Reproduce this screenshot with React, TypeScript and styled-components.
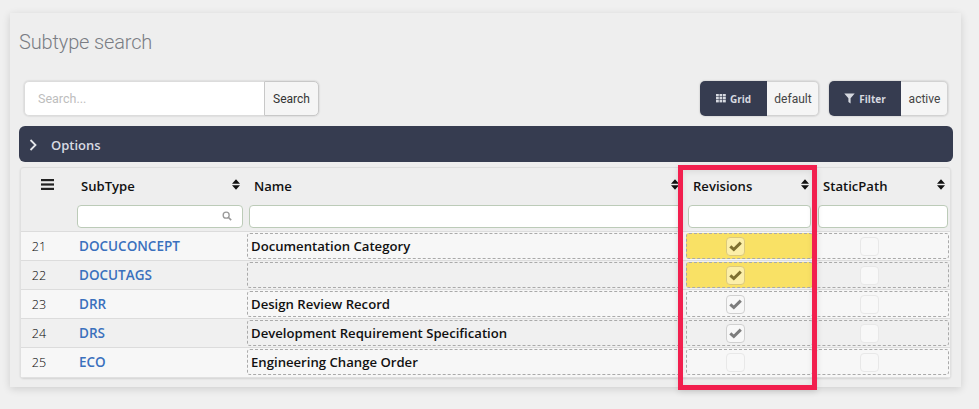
import React from 'react'
import styled, {createGlobalStyle} from 'styled-components'

const rows = [
  {id: 21, subType: 'DOCUCONCEPT', name: 'Documentation Category', revisions: true, changed: true},
  {id: 22, subType: 'DOCUTAGS', name: '', revisions: true, changed: true},
  {id: 23, subType: 'DRR', name: 'Design Review Record', revisions: true, changed: false},
  {id: 24, subType: 'DRS', name: 'Development Requirement Specification', revisions: true, changed: false},
  {id: 25, subType: 'ECO', name: 'Engineering Change Order', revisions: false, changed: false},
]

const SortIcon = () => (
  <SortSvg viewBox="0 0 8 11">
    <path d="M4 0.2 L8 4.8 H0 Z M4 10.8 L0 6.2 H8 Z" fill="#111" />
  </SortSvg>
)

const CheckIcon = () => (
  <svg width="13" height="11" viewBox="0 0 13 11">
    <path d="M1.3 5.4 L4.8 8.5 L11.8 1.6" fill="none" stroke="currentColor" strokeWidth="3" />
  </svg>
)

const GridIcon = () => (
  <svg width="10" height="9" viewBox="0 0 10 9" fill="#d6d9e0">
    {[0, 3.5, 7].map(x => [0, 3, 6].map(y => <rect key={`${x}-${y}`} x={x} y={y} width="2.8" height="2.4" />))}
  </svg>
)

const FilterIcon = () => (
  <svg width="11" height="11" viewBox="0 0 11 11">
    <path d="M0.3 0.5 H10.7 L6.6 5.2 V10.5 L4.4 9 V5.2 Z" fill="#d6d9e0" />
  </svg>
)

const SearchGlass = () => (
  <GlassSvg viewBox="0 0 12 12">
    <circle cx="5" cy="5" r="3.6" fill="none" stroke="#999" strokeWidth="1.6" />
    <path d="M7.8 7.8 L11 11" stroke="#999" strokeWidth="2" />
  </GlassSvg>
)

const App: React.FC = () => {
  return (
    <Page>
      <GlobalStyle />
      <Panel>
        <Title>Subtype search</Title>
        <Toolbar>
          <SearchGroup>
            <SearchInput placeholder="Search..." />
            <SearchButton>Search</SearchButton>
          </SearchGroup>
          <Spacer />
          <ToggleGroup>
            <ToggleDark $width={67}><GridIcon />Grid</ToggleDark>
            <ToggleLight $width={52}>default</ToggleLight>
          </ToggleGroup>
          <ToggleGroup>
            <ToggleDark $width={72}><FilterIcon />Filter</ToggleDark>
            <ToggleLight $width={47}>active</ToggleLight>
          </ToggleGroup>
        </Toolbar>
        <OptionsBar>
          <svg width="8" height="12" viewBox="0 0 8 12">
            <path d="M1.5 1 L6.5 6 L1.5 11" fill="none" stroke="#e4e6ea" strokeWidth="1.8" />
          </svg>
          <span>Options</span>
        </OptionsBar>
        <Table>
          <HeaderRow>
            <HandleCell>
              <svg width="13" height="11" viewBox="0 0 13 11" fill="#222">
                <rect y="0" width="13" height="2.2" />
                <rect y="4.4" width="13" height="2.2" />
                <rect y="8.8" width="13" height="2.2" />
              </svg>
            </HandleCell>
            <HeaderCell $inset={6} $end={7}>SubType<SortIcon /></HeaderCell>
            <HeaderCell $inset={7} $end={6}>Name<SortIcon /></HeaderCell>
            <HeaderCell $inset={8} $end={6}>Revisions<SortIcon /></HeaderCell>
            <HeaderCell $inset={8} $end={5}>StaticPath<SortIcon /></HeaderCell>
          </HeaderRow>
          <FilterRow>
            <div />
            <FilterCell $left={2} $right={4}>
              <FilterInput />
              <SearchGlass />
            </FilterCell>
            <FilterCell $left={2} $right={2}><FilterInput /></FilterCell>
            <FilterCell $left={3} $right={4}><FilterInput /></FilterCell>
            <FilterCell $left={3} $right={2}><FilterInput /></FilterCell>
          </FilterRow>
          {rows.map((row, i) => (
            <DataRow key={row.id} $odd={i % 2 === 1} $last={i === rows.length - 1}>
              <IdCell>{row.id}</IdCell>
              <SubTypeCell>{row.subType}</SubTypeCell>
              <EditCell>{row.name}</EditCell>
              <RevisionCell $changed={row.changed}>
                <CheckBox $checked={row.revisions} $changed={row.changed}>
                  {row.revisions && <CheckIcon />}
                </CheckBox>
              </RevisionCell>
              <StaticCell>
                <CheckBox $checked={false} $changed={false} />
              </StaticCell>
            </DataRow>
          ))}
        </Table>
      </Panel>
      <Highlight />
    </Page>
  )
}

export default App

const GlobalStyle = createGlobalStyle`
  html, body {
    margin: 0;
    background: #f0f0f0;
  }
  * {
    box-sizing: border-box;
  }
`

const Page = styled.div`
  position: relative;
  width: 979px;
  height: 409px;
  padding: 13px 18px 0 10px;
  overflow: hidden;
  font-family: "Open Sans", "Noto Sans", sans-serif;
`

const Panel = styled.div`
  height: 374px;
  padding: 14px 8px 0 9px;
  background: #eeeeee;
  box-shadow: 0 2px 8px rgba(0, 0, 0, 0.14);
`

const Title = styled.h1`
  margin: 0;
  height: 54px;
  padding-top: 1px;
  font: 300 20px/28px Roboto, sans-serif;
  letter-spacing: -0.15px;
  color: #7a7d84;
`

const Toolbar = styled.div`
  display: flex;
  align-items: stretch;
  height: 35px;
  padding: 0 5px;
  gap: 10px;
`

const Spacer = styled.div`
  flex: 1;
`

const SearchGroup = styled.div`
  display: flex;
  width: 295px;
  border-radius: 5px;
  box-shadow: 0 0 2px rgba(0, 0, 0, 0.2);
`

const SearchInput = styled.input`
  flex: 1;
  min-width: 0;
  padding: 0 13px;
  border: 1px solid #dcdcdc;
  border-right: 0;
  border-radius: 5px 0 0 5px;
  background: #fff;
  font: 400 12.5px Roboto, sans-serif;
  outline: none;
  &::placeholder {
    color: #bdbdbd;
  }
`

const SearchButton = styled.div`
  display: flex;
  align-items: center;
  justify-content: center;
  width: 55px;
  border: 1px solid #c8c8c8;
  border-radius: 0 5px 5px 0;
  background: #f5f5f5;
  font: 400 12px Roboto, sans-serif;
  color: #333;
`

const ToggleGroup = styled.div`
  display: flex;
  border-radius: 5px;
  box-shadow: 0 0 2px rgba(0, 0, 0, 0.25);
`

const ToggleDark = styled.div<{$width: number}>`
  display: flex;
  align-items: center;
  justify-content: center;
  gap: 4px;
  width: ${p => p.$width}px;
  border-radius: 5px 0 0 5px;
  background: #363c50;
  color: #d6d9e0;
  font: 700 10px "Open Sans", sans-serif;
`

const ToggleLight = styled.div<{$width: number}>`
  display: flex;
  align-items: center;
  justify-content: center;
  width: ${p => p.$width}px;
  padding-left: 1px;
  border: 1px solid #d2d2d2;
  border-left: 0;
  border-radius: 0 5px 5px 0;
  background: #f5f5f5;
  font: 400 12px Roboto, sans-serif;
  color: #444;
`

const OptionsBar = styled.div`
  display: flex;
  align-items: center;
  gap: 14px;
  height: 36px;
  margin-top: 10px;
  padding: 1px 0 0 10px;
  border-radius: 6px;
  background: #363c50;
  color: #d8dbe2;
  font-size: 13px;
  font-weight: 600;
`

const columns = '54px 172px 438px 130px 135px'

const Table = styled.div`
  width: 931px;
  margin: 5px 0 0 1px;
  border: 1px solid #e0e0e0;
  border-top-color: #dddddd;
  border-radius: 4px;
  box-shadow: 0 1px 2px rgba(0, 0, 0, 0.12);
`

const HeaderRow = styled.div`
  display: grid;
  grid-template-columns: ${columns};
  height: 37px;
`

const HandleCell = styled.div`
  display: flex;
  justify-content: center;
  padding: 11px 2px 0 0;
`

const HeaderCell = styled.div<{$inset: number; $end: number}>`
  display: flex;
  align-items: center;
  justify-content: space-between;
  padding: 0 ${p => p.$end}px 1px ${p => p.$inset}px;
  font-size: 13.1px;
  font-weight: 600;
  color: #111;
`

const SortSvg = styled.svg`
  width: 8px;
  height: 11px;
  margin-top: -4px;
`

const FilterRow = styled.div`
  display: grid;
  grid-template-columns: ${columns};
  height: 27px;
  border-bottom: 1px solid #dcdcdc;
`

const FilterCell = styled.div<{$left: number; $right: number}>`
  position: relative;
  padding: 0 ${p => p.$right}px 0 ${p => p.$left}px;
`

const FilterInput = styled.input`
  display: block;
  width: 100%;
  height: 23px;
  border: 1px solid #bccbb8;
  border-radius: 4px;
  background: #fff;
  outline: none;
`

const GlassSvg = styled.svg`
  position: absolute;
  top: 6px;
  right: 15px;
  width: 10px;
  height: 10px;
`

const DataRow = styled.div<{$odd: boolean; $last: boolean}>`
  display: grid;
  grid-template-columns: ${columns};
  height: 29px;
  background: ${p => p.$odd ? '#f0f0f0' : '#f7f7f7'};
  border-bottom: 1px solid ${p => p.$last ? 'transparent' : '#dcdcdc'};
`

const IdCell = styled.div`
  display: flex;
  align-items: center;
  justify-content: center;
  padding: 1px 18px 0 0;
  font-size: 12.5px;
  font-weight: 300;
  color: #000;
`

const SubTypeCell = styled.div`
  display: flex;
  align-items: center;
  padding-left: 4px;
  font-size: 13.5px;
  font-weight: 600;
  color: #3a70bd;
`

const DashedCell = styled.div`
  display: flex;
  align-items: center;
  margin: 1px 0;
  border: 1px dashed #aaaaaa;
  border-radius: 3px;
`

const EditCell = styled(DashedCell)`
  margin-right: 2px;
  padding-left: 3px;
  font-size: 13.15px;
  font-weight: 600;
  color: #111;
`

const RevisionCell = styled(DashedCell)<{$changed: boolean}>`
  justify-content: center;
  margin-left: 1px;
  margin-right: 2px;
  padding-right: 28px;
  background: ${p => p.$changed ? '#f9e165' : 'transparent'};
`

const StaticCell = styled(DashedCell)`
  justify-content: center;
  margin-left: 1px;
  margin-right: 1px;
  padding-right: 26px;
`

const CheckBox = styled.div<{$checked: boolean; $changed: boolean}>`
  display: flex;
  align-items: center;
  justify-content: center;
  width: 19px;
  height: 19px;
  border: 1px solid ${p => p.$changed ? '#dcc97a' : p.$checked ? '#d0d0d0' : '#e8e8e8'};
  border-radius: 4px;
  background: ${p => p.$changed ? '#fcefa9' : '#f8f8f8'};
  color: ${p => p.$changed ? '#7f7030' : '#7d7d7d'};
`

const Highlight = styled.div`
  position: absolute;
  left: 678px;
  top: 165px;
  width: 139px;
  height: 225px;
  border: 5px solid #f21f4e;
  box-shadow: 0 2px 6px rgba(0, 0, 0, 0.12), inset 0 2px 6px rgba(0, 0, 0, 0.08);
  pointer-events: none;
`
